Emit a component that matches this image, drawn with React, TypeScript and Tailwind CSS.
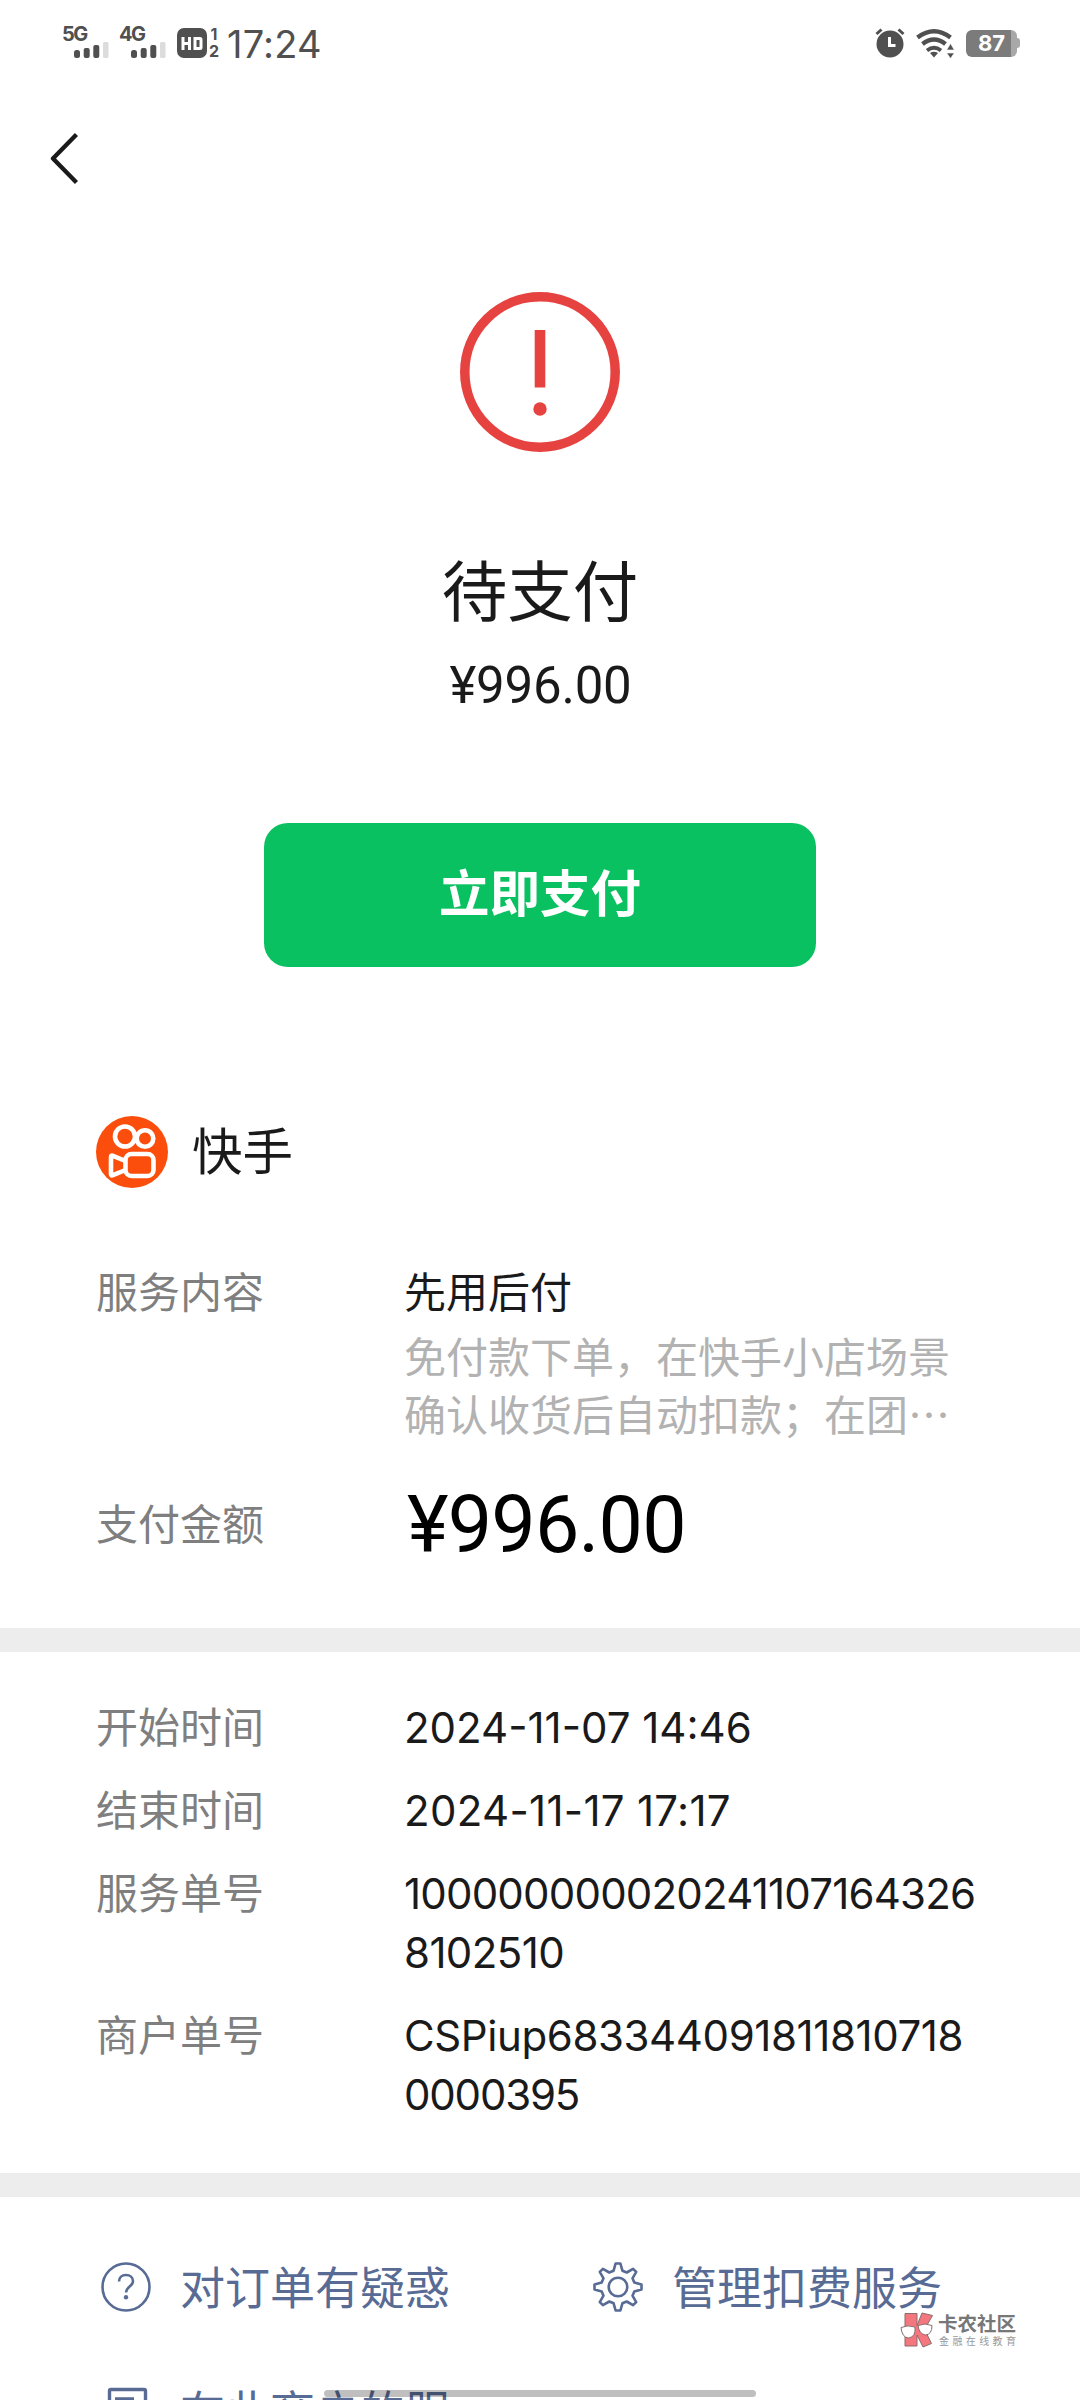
import type { ReactNode } from 'react';

/* ── Data ───────────────────────────────────────────────── */
interface OrderRow {
  label: string;
  lines: { text: string; className: string }[];
}

const ORDER_ROWS: OrderRow[] = [
  { label: '开始时间', lines: [{ text: '2024-11-07 14:46', className: 'tracking-[0px]' }] },
  { label: '结束时间', lines: [{ text: '2024-11-17 17:17', className: 'tracking-[0.3px]' }] },
  {
    label: '服务单号',
    lines: [
      { text: '100000000020241107164326', className: 'tracking-[-0.8px]' },
      { text: '8102510', className: 'tracking-[-0.6px]' },
    ],
  },
  {
    label: '商户单号',
    lines: [
      { text: 'CSPiup683344091811810718', className: 'tracking-[-0.4px]' },
      { text: '0000395', className: 'tracking-[-1.2px]' },
    ],
  },
];

/* ── Status bar ─────────────────────────────────────────── */
function Signal({ label }: { label: string }) {
  return (
    <div className="flex h-8 w-[47px] flex-col">
      <span className="h-[15px] font-['Inter'] text-[20px] font-bold leading-[15px] tracking-[-1.5px]">
        {label}
      </span>
      <svg className="ml-[12px] shrink-0" width="35" height="16" viewBox="0 0 35 16" fill="currentColor">
        <rect x="0" y="8" width="6" height="8" rx="2.5" />
        <rect x="9.7" y="6" width="6" height="10" rx="2" />
        <rect x="19.3" y="3" width="6" height="13" rx="2" />
        <rect x="29" y="0" width="5.5" height="16" rx="1.5" fill="#dcdcdc" />
      </svg>
    </div>
  );
}

function StatusBar() {
  return (
    <header className="flex h-[86px] shrink-0 items-center justify-between pl-[62px] pr-[60px] text-[#505050]">
      <div className="flex items-center">
        <Signal label="5G" />
        <div className="w-[10px]" />
        <Signal label="4G" />
        <div className="ml-[11px] flex h-[30px] w-[30px] items-center justify-center rounded-[7px] bg-[#505050]">
          <svg width="22" height="13" viewBox="0 0 22 13" fill="none" stroke="#fff" strokeWidth="3">
            <path d="M2 0v13M8.5 0v13M2 6.5h6.5M14 1.5h5q1 0 1 1v8q0 1-1 1h-5z" />
          </svg>
        </div>
        <div className="ml-[1px] flex w-[12px] flex-col items-center font-['Inter'] text-[16px] font-bold leading-[17px]">
          <span>1</span>
          <span>2</span>
        </div>
        <span className="ml-[7px] pt-[2px] font-['Inter'] text-[38px] leading-none tracking-[0.2px]">17:24</span>
      </div>

      <div className="flex items-center">
        <svg width="30" height="30" viewBox="0 0 30 30" fill="currentColor">
          <circle cx="15" cy="16" r="13.5" />
          <path d="M1.5 6l5-4.5M28.5 6l-5-4.5" stroke="currentColor" strokeWidth="3" />
          <path d="M14.5 9v8.500h6" stroke="#fff" strokeWidth="3" fill="none" />
        </svg>
        <svg className="ml-[11px]" width="39" height="30" viewBox="0 0 39 30" fill="none" stroke="currentColor" strokeWidth="4.4">
          <path d="M1.500 9.500Q18 -3 34.500 9.500" />
          <path d="M6.500 16Q18 7 29.500 16" />
          <path d="M11 22.500Q18 17 25 22.500" strokeWidth="3.800" />
          <path d="M18 29.500l-4-4.500q4-2.600 8 0z" fill="currentColor" stroke="none" />
          <path d="M34.500 15.500l3.800 6.500h-7.600zM34.500 30.500l3.800-5.500h-7.600z" fill="currentColor" stroke="#fff" strokeWidth="0.6" />
        </svg>
        <div className="ml-[11px] flex items-center">
          <div className="flex h-[27px] w-[51px] items-center justify-center rounded-[6px] bg-[linear-gradient(to_right,#7b7b7b_88%,#a8a8a8_88%)]">
            <span className="font-['Inter'] text-[22px] font-bold leading-none text-white">87</span>
          </div>
          <div className="h-[10px] w-[3px] rounded-r-[3px] bg-[#a8a8a8]" />
        </div>
      </div>
    </header>
  );
}

/* ── Icons ──────────────────────────────────────────────── */
function KuaishouLogo() {
  return (
    <svg width="72" height="72" viewBox="0 0 72 72" fill="none" stroke="#fff" strokeWidth="4.6">
      <circle cx="36" cy="36" r="36" fill="#fb4e0c" stroke="none" />
      <circle cx="29" cy="20.5" r="10" />
      <circle cx="49" cy="22.5" r="8.3" />
      <rect x="29.5" y="38" width="28" height="22" rx="6" />
      <path d="M29.5 45l-12.5-5.2q-2-.8-2 1.4v16.6q0 2.2 2 1.4l12.5-5.2" strokeLinejoin="round" />
    </svg>
  );
}

function QuestionIcon() {
  return (
    <svg width="50" height="50" viewBox="0 0 50 50" fill="none" stroke="currentColor" strokeWidth="2.6">
      <circle cx="25" cy="25" r="23.5" />
      <path d="M18 19.5c0-4 3-6.5 7-6.5s7 2.5 7 6.2c0 5.3-7 5.3-7 11.3" />
      <circle cx="25" cy="35.3" r="2.2" fill="currentColor" stroke="none" />
    </svg>
  );
}

function GearIcon() {
  return (
    <svg width="50" height="50" viewBox="0 0 50 50" fill="none" stroke="currentColor" strokeWidth="2.6" strokeLinejoin="round">
      <circle cx="25" cy="25" r="9.3" />
      <path d="M22.6 1.5h4.8l2 7.2 4.3 1.8 6.4-3.7 3.1 3.1-3.7 6.4 1.8 4.3 7.2 2v4.8l-7.2 2-1.8 4.3 3.7 6.4-3.1 3.1-6.4-3.7-4.3 1.8-2 7.2h-4.8l-2-7.2-4.3-1.8-6.4 3.7-3.1-3.1 3.7-6.4-1.8-4.3-7.2-2v-4.8l7.2-2 1.8-4.3-3.7-6.4 3.1-3.1 6.4 3.7 4.3-1.8z" />
    </svg>
  );
}

function ReceiptIcon() {
  return (
    <svg width="50" height="50" viewBox="0 0 50 50" fill="none" stroke="currentColor" strokeWidth="3.4">
      <rect x="8.5" y="3.5" width="36" height="44" rx="1.5" />
      <path d="M14 13h19M14 23h19" />
    </svg>
  );
}

/* ── Blocks ─────────────────────────────────────────────── */
function Label({ children }: { children: ReactNode }) {
  return <dt className="w-[308px] shrink-0 text-[42px] leading-[59px] text-[#7f7f7f]">{children}</dt>;
}

function FooterLink({ icon, children }: { icon: ReactNode; children: ReactNode }) {
  return (
    <a className="flex h-[60px] items-center gap-[29px] whitespace-nowrap text-[45px] leading-[60px] text-[#576b95]">
      {icon}
      <span className="pb-[2px]">{children}</span>
    </a>
  );
}

function Watermark() {
  return (
    <div className="absolute left-[899px] top-[2312px] flex items-center gap-[3px]">
      <svg width="36" height="36" viewBox="0 0 36 36" stroke="#8a6d6d" strokeWidth="1">
        <path d="M6 1.5h12v12l5-12.5 10.5 2.5-8 14 7 14-8.5 3.5-6-12V34H6z" fill="#f4777f" />
        <path d="M2 15.5q7-3 14-.5 1 10-6.500 11Q3 25.500 2 15.500z" fill="#fff" />
        <path d="M19 13.500q7-3 14 0 0 9-6.500 9.500Q20 22 19 13.500z" fill="#fff" />
      </svg>
      <div className="flex flex-col gap-[1px] whitespace-nowrap">
        <span className="h-[20px] text-[19.5px] font-bold leading-[20px] text-[#777]">卡农社区</span>
        <span className="h-[14px] pl-[1px] text-[10px] leading-[14px] tracking-[3.4px] text-[#999]">金融在线教育</span>
      </div>
    </div>
  );
}

export default function App() {
  return (
    <div className="relative flex h-[2400px] w-[1080px] flex-col overflow-hidden bg-white font-['Noto_Sans_CJK_SC',sans-serif] text-[#1a1a1a]">
      <StatusBar />

      <nav className="flex h-[146px] shrink-0 items-center pl-[50px]">
        <svg width="28" height="54" viewBox="0 0 28 54" fill="none" stroke="currentColor" strokeWidth="4.4" strokeLinejoin="round">
          <path d="M26.500 2.500L3 26.500l23.500 24" />
        </svg>
      </nav>

      {/* payment state */}
      <section className="flex shrink-0 flex-col items-center pt-[60px]">
        <svg width="160" height="160" viewBox="0 0 160 160" fill="#e64340">
          <circle cx="80" cy="80" r="75.2" fill="none" stroke="#e64340" strokeWidth="9.5" />
          <rect x="74.7" y="38" width="10.6" height="57.5" />
          <circle cx="80" cy="117" r="6.7" />
        </svg>
        <h1 className="mt-[88px] text-[65.5px] leading-[96px]">待支付</h1>
        <p className="mt-[15px] pl-[1px] font-['Roboto'] text-[51px] leading-[70px] tracking-[-0.2px]">¥996.00</p>
        <button
          type="button"
          className="mt-[102px] h-[144px] w-[552px] rounded-[24px] bg-[#09c160] pb-[9px] text-[50.5px] font-bold text-white"
        >
          立即支付
        </button>
      </section>

      {/* merchant and service */}
      <section className="mt-[149px] flex shrink-0 flex-col px-24">
        <div className="flex h-[72px] items-center gap-6">
          <KuaishouLogo />
          <span className="pb-[8px] text-[50.5px] leading-[70px]">快手</span>
        </div>
        <dl className="mt-[72px] flex">
          <Label>服务内容</Label>
          <dd className="text-[42px]">
            <p className="leading-[59px]">先用后付</p>
            <p className="mt-[7px] whitespace-nowrap leading-[58px] text-[#b2b2b2]">
              免付款下单，在快手小店场景
              <br />
              确认收货后自动扣款；在团…
            </p>
          </dd>
        </dl>
        <dl className="mt-[34px] flex h-[90px] items-center">
          <Label>支付金额</Label>
          <dd className="pl-[3px] pt-[8px] font-['Roboto'] text-[79px] leading-[90px] tracking-[-0.8px] text-black">
            ¥996.00
          </dd>
        </dl>
      </section>

      <div className="mt-[62px] h-6 shrink-0 bg-[#ededed]" />

      {/* order info */}
      <section className="flex shrink-0 flex-col gap-[21px] px-24 pt-[43px]">
        {ORDER_ROWS.map(row => (
          <dl key={row.label} className="flex">
            <Label>{row.label}</Label>
            <dd className="pt-[3px] font-['Inter'] text-[42px] leading-[59px]">
              {row.lines.map(l => (
                <p key={l.text} className={`whitespace-nowrap ${l.className}`}>{l.text}</p>
              ))}
            </dd>
          </dl>
        ))}
      </section>

      <div className="mt-[49px] h-6 shrink-0 bg-[#ededed]" />

      <footer className="grid shrink-0 grid-cols-[492px_1fr] gap-y-[64px] pl-[101px] pt-[60px]">
        <FooterLink icon={<QuestionIcon />}>对订单有疑惑</FooterLink>
        <FooterLink icon={<GearIcon />}>管理扣费服务</FooterLink>
        <FooterLink icon={<ReceiptIcon />}>在此商户的服</FooterLink>
      </footer>

      <Watermark />
      {/* gesture bar */}
      <div className="absolute left-[324px] top-[2390px] h-[7px] w-[432px] rounded-full bg-black/25" />
    </div>
  );
}
